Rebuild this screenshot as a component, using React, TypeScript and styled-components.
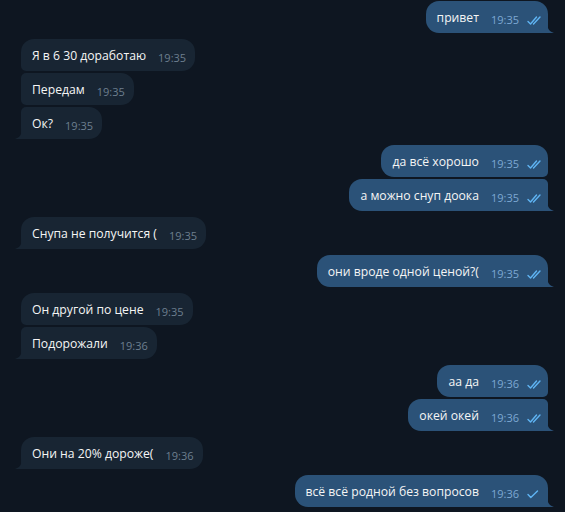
import React from "react";
import styled, { createGlobalStyle } from "styled-components";

const Global = createGlobalStyle`
  html, body { margin: 0; padding: 0; background: #0e1621; }
  body { width: 565px; height: 512px; overflow: hidden; font-family: "Open Sans", "Noto Sans", sans-serif; }
`;

type Side = "in" | "out";

const Chat = styled.div`
  width: 565px;
  height: 512px;
  box-sizing: border-box;
  background: #0e1621;
  padding: 1px 17px 0 21px;
  display: flex;
  flex-direction: column;
  gap: 6px;
`;

const Group = styled.div<{ $side: Side }>`
  display: flex;
  flex-direction: column;
  gap: 2px;
  align-items: ${(p) => (p.$side === "out" ? "flex-end" : "flex-start")};
`;

const Bubble = styled.div<{ $side: Side; $first: boolean; $last: boolean }>`
  position: relative;
  box-sizing: border-box;
  height: 32px;
  display: flex;
  align-items: flex-end;
  padding: ${(p) => (p.$side === "out" ? "7px 6px 6px 11px" : "7px 9px 6px 11px")};
  background: ${(p) => (p.$side === "out" ? "#2b5278" : "#182533")};
  color: #f5f5f5;
  border-radius: ${(p) => {
    const big = "13px";
    const small = "5px";
    if (p.$side === "out") {
      return `${big} ${p.$first ? big : small} ${p.$last ? "0" : small} ${big}`;
    }
    return `${p.$first ? big : small} ${big} ${big} ${p.$last ? "0" : small}`;
  }};
`;

const Text = styled.span`
  font-size: 12.2px;
  line-height: 18px;
  white-space: nowrap;
`;

const Meta = styled.span<{ $side: Side }>`
  display: flex;
  align-items: center;
  margin-left: 12px;
  font-size: 11px;
  line-height: 16px;
  color: ${(p) => (p.$side === "out" ? "#7da8d3" : "#6d7f8f")};
  transform: translateY(1px);
`;

const Check = styled.svg`
  margin-left: 8px;
  width: 15px;
  height: 11px;
  color: #5fb4f3;
`;

const Tail = styled.svg<{ $side: Side }>`
  position: absolute;
  bottom: 0;
  width: 7px;
  height: 11px;
  ${(p) => (p.$side === "out" ? "right: -6px;" : "left: -6px; transform: scaleX(-1);")}
  fill: ${(p) => (p.$side === "out" ? "#2b5278" : "#182533")};
`;

type Msg = { text: string; time: string; read?: boolean };
type G = { side: Side; msgs: Msg[] };

const data: G[] = [
  { side: "out", msgs: [{ text: "привет", time: "19:35", read: true }] },
  {
    side: "in",
    msgs: [
      { text: "Я в 6 30 доработаю", time: "19:35" },
      { text: "Передам", time: "19:35" },
      { text: "Ок?", time: "19:35" },
    ],
  },
  {
    side: "out",
    msgs: [
      { text: "да всё хорошо", time: "19:35", read: true },
      { text: "а можно снуп доока", time: "19:35", read: true },
    ],
  },
  { side: "in", msgs: [{ text: "Снупа не получится (", time: "19:35" }] },
  { side: "out", msgs: [{ text: "они вроде одной ценой?(", time: "19:35", read: true }] },
  {
    side: "in",
    msgs: [
      { text: "Он другой по цене", time: "19:35" },
      { text: "Подорожали", time: "19:36" },
    ],
  },
  {
    side: "out",
    msgs: [
      { text: "аа да", time: "19:36", read: true },
      { text: "окей окей", time: "19:36", read: true },
    ],
  },
  { side: "in", msgs: [{ text: "Они на 20% дороже(", time: "19:36" }] },
  { side: "out", msgs: [{ text: "всё всё родной без вопросов", time: "19:36", read: false }] },
];

const Checks = ({ read }: { read: boolean }) => (
  <Check viewBox="0 0 15 11" fill="none" stroke="currentColor" strokeWidth="1.4" strokeLinecap="round" strokeLinejoin="round">
    {read ? (
      <>
        <path d="M1 6.5 L3.5 9 L9.5 2" />
        <path d="M6.5 9 L13 2" />
      </>
    ) : (
      <path d="M1 5.5 L3.8 8.5 L10.5 2" />
    )}
  </Check>
);

export default function App() {
  return (
    <>
      <Global />
      <Chat>
        {data.map((g, gi) => (
          <Group key={gi} $side={g.side}>
            {g.msgs.map((m, mi) => {
              const first = mi === 0;
              const last = mi === g.msgs.length - 1;
              return (
                <Bubble key={mi} $side={g.side} $first={first} $last={last}>
                  <Text>{m.text}</Text>
                  <Meta $side={g.side}>
                    {m.time}
                    {g.side === "out" && <Checks read={!!m.read} />}
                  </Meta>
                  {last && (
                    <Tail $side={g.side} viewBox="0 0 7 11">
                      <path d="M0 0 C0 6 2 9.5 7 11 L0 11 Z" />
                    </Tail>
                  )}
                </Bubble>
              );
            })}
          </Group>
        ))}
      </Chat>
    </>
  );
}
